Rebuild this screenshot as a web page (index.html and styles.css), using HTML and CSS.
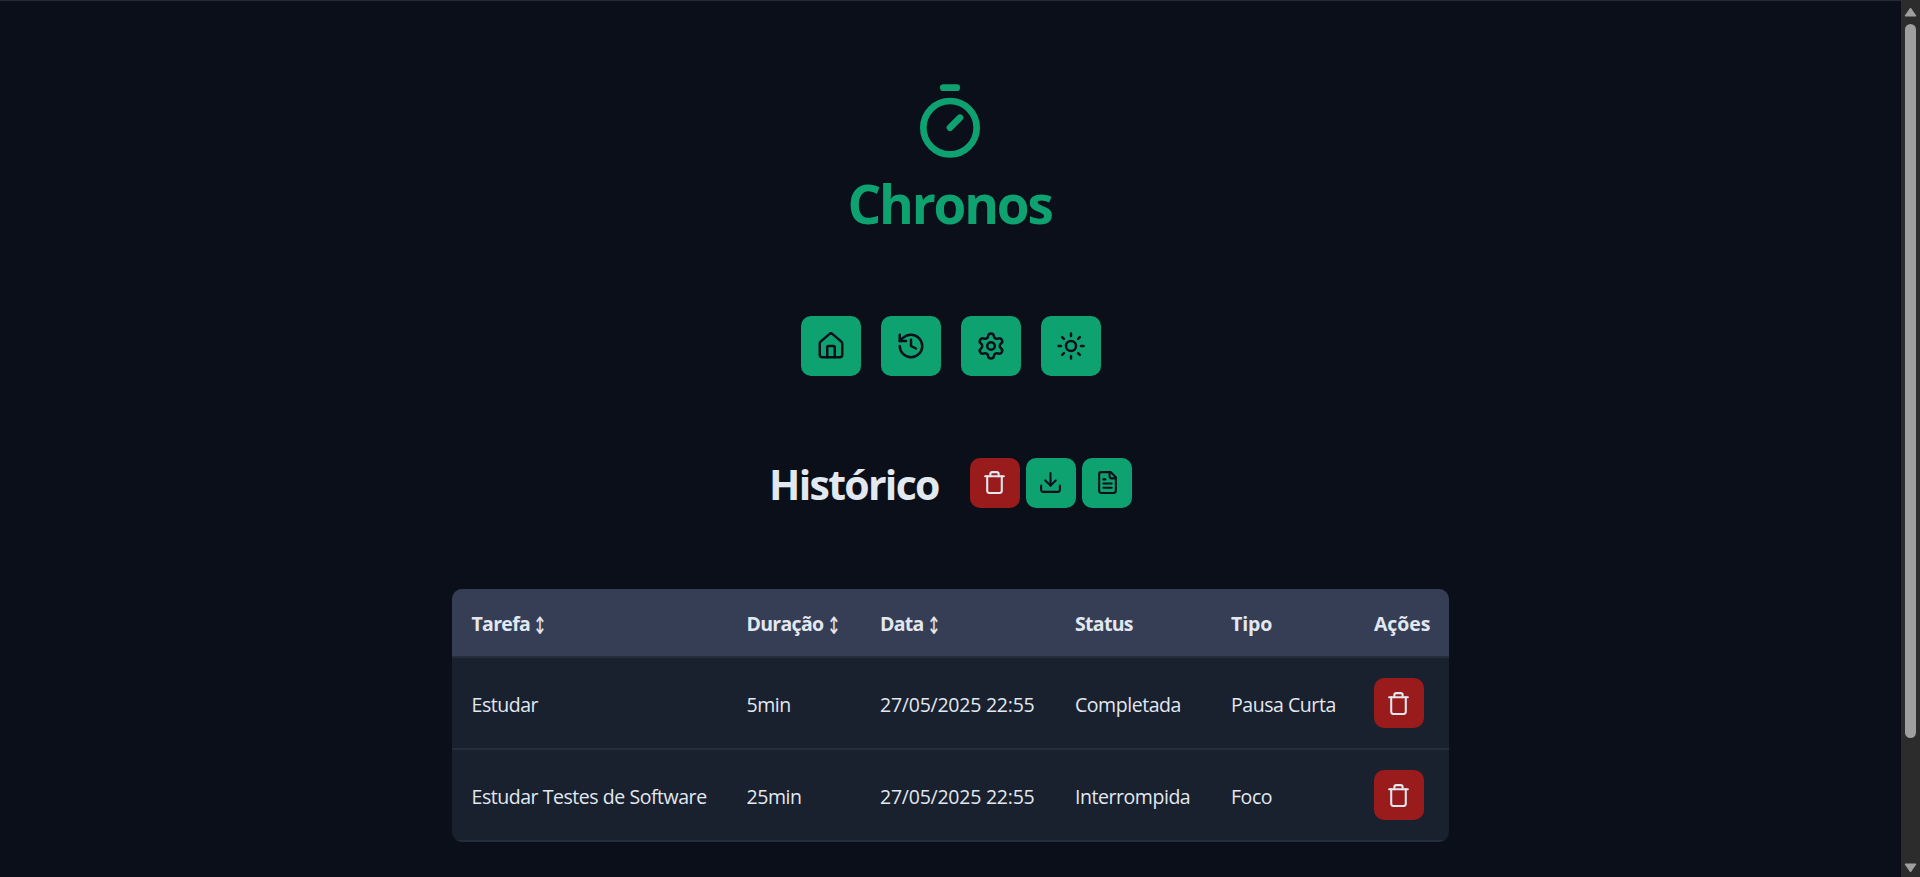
FILE: index.html
```
<!DOCTYPE html>
<html lang="pt-BR">
<head>
    <meta charset="UTF-8">
    <meta name="viewport" content="width=device-width, initial-scale=1.0">
    <title>Chronos</title>
    <link rel="stylesheet" href="styles.css">
</head>
<body>
    <svg class="symbols" xmlns="http://www.w3.org/2000/svg">
        <symbol id="trash" viewBox="0 0 24 24">
            <path d="M3 6h18"/>
            <path d="M19 6v14a2 2 0 0 1-2 2H7a2 2 0 0 1-2-2V6"/>
            <path d="M8 6V4a2 2 0 0 1 2-2h4a2 2 0 0 1 2 2v2"/>
        </symbol>
    </svg>

    <div class="page">
        <header class="logo">
            <svg class="icon" viewBox="0 0 24 24">
                <path d="M10 2h4"/>
                <path d="m12 14 3-3"/>
                <circle cx="12" cy="14" r="8"/>
            </svg>
            <span>Chronos</span>
        </header>

        <nav class="menu">
            <a href="#" aria-label="Início">
                <svg class="icon" viewBox="0 0 24 24">
                    <path d="M15 21v-8a1 1 0 0 0-1-1h-4a1 1 0 0 0-1 1v8"/>
                    <path d="M3 10a2 2 0 0 1 .709-1.528l7-5.999a2 2 0 0 1 2.582 0l7 5.999A2 2 0 0 1 21 10v9a2 2 0 0 1-2 2H5a2 2 0 0 1-2-2z"/>
                </svg>
            </a>
            <a href="#" aria-label="Histórico">
                <svg class="icon" viewBox="0 0 24 24">
                    <path d="M3 12a9 9 0 1 0 9-9 9.75 9.75 0 0 0-6.74 2.74L3 8"/>
                    <path d="M3 3v5h5"/>
                    <path d="M12 7v5l4 2"/>
                </svg>
            </a>
            <a href="#" aria-label="Configurações">
                <svg class="icon" viewBox="0 0 24 24">
                    <path d="M9.671 4.136a2.34 2.34 0 0 1 4.659 0 2.34 2.34 0 0 0 3.319 1.915 2.34 2.34 0 0 1 2.33 4.033 2.34 2.34 0 0 0 0 3.831 2.34 2.34 0 0 1-2.33 4.033 2.34 2.34 0 0 0-3.319 1.915 2.34 2.34 0 0 1-4.659 0 2.34 2.34 0 0 0-3.32-1.915 2.34 2.34 0 0 1-2.33-4.033 2.34 2.34 0 0 0 0-3.831A2.34 2.34 0 0 1 6.35 6.051a2.34 2.34 0 0 0 3.319-1.915"/>
                    <circle cx="12" cy="12" r="3"/>
                </svg>
            </a>
            <a href="#" aria-label="Mudar tema">
                <svg class="icon" viewBox="0 0 24 24">
                    <circle cx="12" cy="12" r="4"/>
                    <path d="M12 2v2M12 20v2M4.93 4.93l1.41 1.41M17.66 17.66l1.41 1.41M2 12h2M20 12h2M6.34 17.66l-1.41 1.41M19.07 4.93l-1.41 1.41"/>
                </svg>
            </a>
        </nav>

        <section class="heading">
            <h2>Histórico</h2>
            <div class="actions">
                <button class="btn red" aria-label="Apagar histórico"><svg class="icon"><use href="#trash"/></svg></button>
                <button class="btn green" aria-label="Baixar">
                    <svg class="icon" viewBox="0 0 24 24">
                        <path d="M12 15V3"/>
                        <path d="M21 15v4a2 2 0 0 1-2 2H5a2 2 0 0 1-2-2v-4"/>
                        <path d="m7 10 5 5 5-5"/>
                    </svg>
                </button>
                <button class="btn green" aria-label="Relatório">
                    <svg class="icon last" viewBox="0 0 24 24">
                        <path d="M15 2H6a2 2 0 0 0-2 2v16a2 2 0 0 0 2 2h12a2 2 0 0 0 2-2V7Z"/>
                        <path d="M14 2v4a2 2 0 0 0 2 2h4"/>
                        <path d="M10 9H8M16 13H8M16 17H8"/>
                    </svg>
                </button>
            </div>
        </section>

        <div class="table-box">
            <table>
                <colgroup>
                    <col class="c-tarefa"><col class="c-duracao"><col class="c-data"><col class="c-status"><col class="c-tipo"><col class="c-acoes">
                </colgroup>
                <thead>
                    <tr>
                        <th>Tarefa <span class="sort">↕</span></th>
                        <th>Duração <span class="sort">↕</span></th>
                        <th>Data <span class="sort">↕</span></th>
                        <th>Status</th>
                        <th class="wide">Tipo</th>
                        <th class="wide">Ações</th>
                    </tr>
                </thead>
                <tbody>
                    <tr>
                        <td>Estudar</td>
                        <td>5min</td>
                        <td class="date">27/05/2025 22:55</td>
                        <td>Completada</td>
                        <td>Pausa Curta</td>
                        <td class="action"><button class="btn red" aria-label="Apagar"><svg class="icon"><use href="#trash"/></svg></button></td>
                    </tr>
                    <tr>
                        <td>Estudar Testes de Software</td>
                        <td>25min</td>
                        <td class="date">27/05/2025 22:55</td>
                        <td>Interrompida</td>
                        <td>Foco</td>
                        <td class="action"><button class="btn red" aria-label="Apagar"><svg class="icon"><use href="#trash"/></svg></button></td>
                    </tr>
                </tbody>
            </table>
        </div>
    </div>

    <div class="scrollbar">
        <svg viewBox="0 0 13 10"><path d="M6.5 1 12 9H1Z"/></svg>
        <div class="thumb"></div>
        <svg viewBox="0 0 13 10"><path d="M6.5 9 1 1h11Z"/></svg>
    </div>
</body>
</html>
```
FILE: styles.css
```
* {
    margin: 0;
    padding: 0;
    box-sizing: border-box;
}
body {
    font-family: "Segoe UI", "Open Sans", "Noto Sans", sans-serif;
    font-size: 19.5px;
    background: #0a0f1a;
    color: #e2e8f0;
    height: 877px;
    display: flex;
    overflow: hidden;
}
.symbols {
    display: none;
}
.icon {
    flex-shrink: 0;
    fill: none;
    stroke: currentColor;
    stroke-width: 2;
    stroke-linecap: round;
    stroke-linejoin: round;
}
.page {
    flex: 1;
    display: flex;
    flex-direction: column;
    align-items: center;
    border-top: 1px solid #252a33;
    padding-top: 80px;
}
.logo {
    display: flex;
    flex-direction: column;
    align-items: center;
    height: 155px;
    margin-right: 2px;
    color: #0fa271;
    font-size: 53px;
    font-weight: 700;
    letter-spacing: -2.2px;
}
.logo .icon {
    width: 80px;
    height: 80px;
}
.logo span {
    line-height: 76px;
    margin-top: 5px;
}
.menu {
    display: flex;
    gap: 20px;
    margin-top: 80px;
}
.menu a {
    width: 60px;
    height: 60px;
    display: flex;
    align-items: center;
    justify-content: center;
    background: #0fa271;
    color: #0a0f1a;
    border-radius: 10px;
}
.menu .icon {
    width: 30px;
    height: 30px;
}
.heading {
    display: flex;
    align-items: center;
    gap: 31px;
    margin-top: 82px;
    height: 50px;
}
.heading h2 {
    width: 170px;
    padding-top: 1px;
    font-size: 41px;
    line-height: 50px;
    letter-spacing: -1.7px;
    white-space: nowrap;
}
.actions {
    display: flex;
    gap: 6px;
}
.btn {
    width: 50px;
    height: 50px;
    display: flex;
    align-items: center;
    justify-content: center;
    border: none;
    border-radius: 10px;
    cursor: pointer;
}
.btn .icon {
    width: 25px;
    height: 25px;
    margin: 0 1px 1px 0;
}
.btn .last {
    margin-right: 0;
}
.red {
    background: #991b1b;
    color: #e2e8f0;
}
.green {
    background: #0fa271;
    color: #0a0f1a;
}
.table-box {
    width: 997px;
    margin-top: 81px;
    border-radius: 10px;
    overflow: hidden;
}
table {
    width: 100%;
    table-layout: fixed;
    border-spacing: 0;
    background: #19202e;
}
th, td {
    padding: 2px 0 0 20px;
    text-align: left;
    white-space: nowrap;
    border-bottom: 2px solid #262e3d;
}
th:first-child, td:first-child,
th:nth-child(2), td:nth-child(2) {
    padding-left: 19.5px;
}
th {
    height: 69px;
    background: #363e56;
    letter-spacing: -0.7px;
}
td {
    height: 92px;
    letter-spacing: -0.45px;
}
.wide {
    letter-spacing: -0.1px;
}
.date {
    letter-spacing: -0.24px;
}
.action {
    padding-top: 0;
}
.action .icon {
    margin-bottom: 0;
}
.sort {
    display: inline-block;
    margin-left: -2px;
    font-family: "DejaVu Sans", sans-serif;
    font-size: 19px;
    line-height: 1;
    font-weight: 400;
    transform: translateY(1px) scale(0.9, 1.25);
}
.c-tarefa { width: 275px; }
.c-duracao { width: 133px; }
.c-data { width: 195px; }
.c-status { width: 156px; }
.c-tipo { width: 143px; }
.c-acoes { width: 95px; }
.scrollbar {
    width: 19px;
    background: #2c2c2c;
    display: flex;
    flex-direction: column;
    align-items: center;
    padding: 7px 0 4px;
}
.scrollbar svg {
    width: 13px;
    height: 10px;
    fill: #9f9f9f;
    stroke: #9f9f9f;
    stroke-linejoin: round;
}
.thumb {
    width: 11px;
    height: 714px;
    margin: 7px 0 auto;
    border-radius: 6px;
    background: #9f9f9f;
}
```
